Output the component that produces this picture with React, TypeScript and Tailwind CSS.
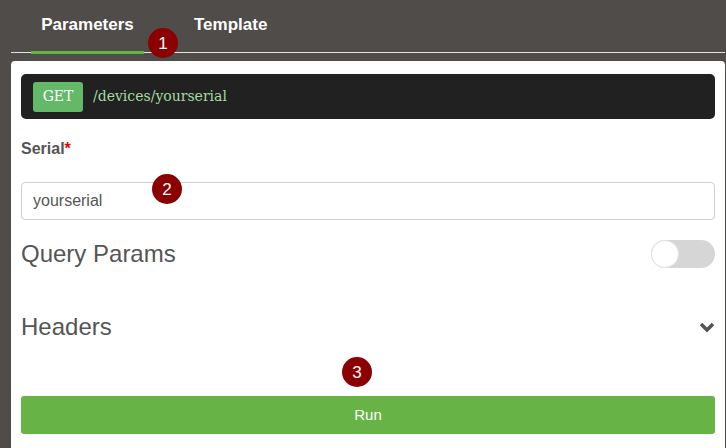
import React, { useState } from "react";

const Marker = ({ n, className }: { n: string; className: string }) => (
  <div
    className={`absolute flex h-[30px] w-[30px] items-center justify-center rounded-full bg-[#8b0000] text-[17px] leading-none text-white ${className}`}
  >
    {n}
  </div>
);

const App = () => {
  const [serial, setSerial] = useState("yourserial");
  const [query, setQuery] = useState(false);

  return (
    <div
      className="relative h-[448px] w-[726px] overflow-hidden bg-[#504c49] pl-[11px] pr-[1px]"
      style={{ fontFamily: '"Liberation Sans", Arial, sans-serif' }}
    >
      {/* Tabs */}
      <div className="flex h-[53px] border-b border-[#e2e2e2]">
        <div className="-mb-[2px] ml-[20px] w-[113px] border-b-[3px] border-[#67b346] pt-[15px] text-center text-[17px] font-bold leading-[20px] text-white">
          Parameters
        </div>
        <div className="-mb-[2px] ml-[40px] px-[10px] pt-[15px] text-[17px] font-bold leading-[20px] text-white">
          Template
        </div>
      </div>

      {/* Panel */}
      <div className="mt-[8px] h-[400px] rounded-t-[4px] bg-white px-[10px] pt-[13px]">
        <div
          className="flex h-[45px] items-center rounded-[5px] bg-[#212121] px-[12px]"
          style={{ fontFamily: '"DejaVu Serif", "Liberation Serif", serif' }}
        >
          <span className="flex h-[30px] w-[50px] items-center justify-center rounded-[3px] bg-[#64b968] text-[14px] text-white">
            GET
          </span>
          <span className="ml-[10px] text-[14px] text-[#a3dba1]">/devices/yourserial</span>
        </div>

        <div className="mt-[20px] text-[16px] font-bold leading-[20px] text-[#555]">
          Serial<span className="text-[#e00]">*</span>
        </div>

        <input
          value={serial}
          onChange={(e) => setSerial(e.target.value)}
          className="mt-[23px] block h-[38px] w-full rounded-[4px] border border-[#ccd0d5] px-[11px] text-[16px] text-[#555] outline-none"
        />

        <div className="mt-[20px] flex h-[28px] items-center justify-between">
          <span className="text-[24px] leading-[28px] text-[#555]">Query Params</span>
          <button
            onClick={() => setQuery(!query)}
            className={`relative h-[28px] w-[64px] rounded-full ${query ? "bg-[#67b346]" : "bg-[#d6d6d6]"}`}
          >
            <span
              className={`absolute top-0 h-[28px] w-[28px] rounded-full border border-[#e4e4e4] bg-white ${query ? "right-0" : "left-0"}`}
            ></span>
          </button>
        </div>

        <div className="mt-[45px] flex h-[28px] items-center justify-between">
          <span className="text-[24px] leading-[28px] text-[#555]">Headers</span>
          <svg width="16" height="11" viewBox="0 0 16 11">
            <path d="M2 2 L8 8 L14 2" fill="none" stroke="#555" strokeWidth="3.6" />
          </svg>
        </div>

        <button className="mt-[55px] block h-[38px] w-full rounded-[3px] bg-[#67b346] text-[15px] text-white">
          Run
        </button>
      </div>

      <Marker n="1" className="left-[148px] top-[28px]" />
      <Marker n="2" className="left-[152px] top-[174px]" />
      <Marker n="3" className="left-[342px] top-[357px]" />
    </div>
  );
};

export default App;
